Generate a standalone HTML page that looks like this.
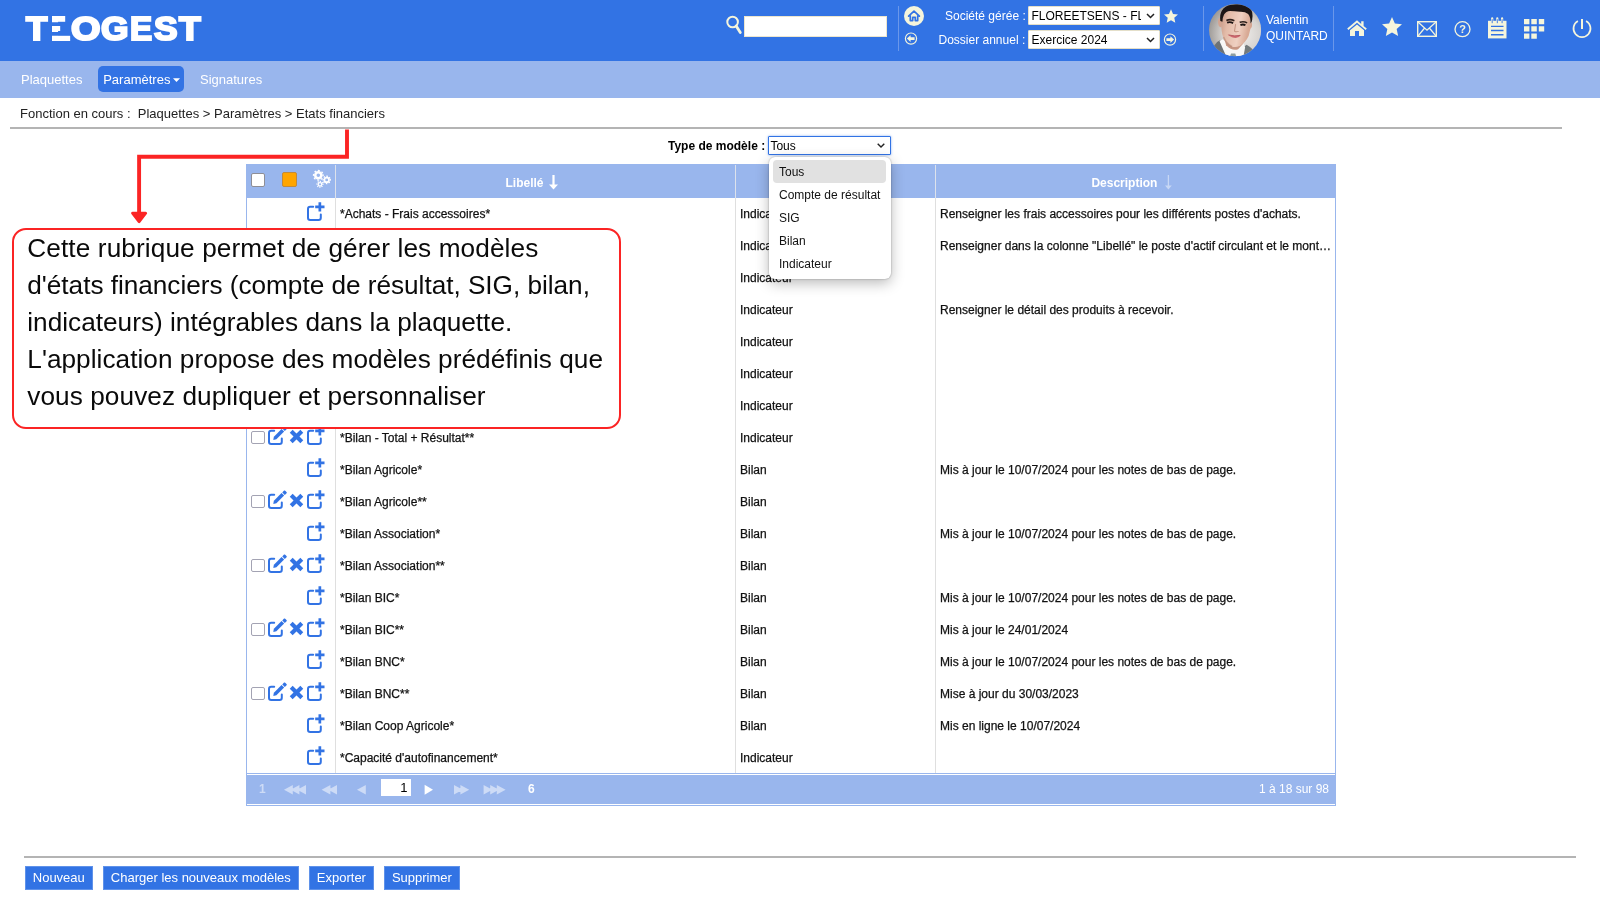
<!DOCTYPE html>
<html lang="fr">
<head>
<meta charset="utf-8">
<title>TEOGEST - Etats financiers</title>
<style>
*{box-sizing:border-box;margin:0;padding:0}
html,body{width:1600px;height:900px;overflow:hidden;background:#fff}
#wrap{position:absolute;left:0;top:0;width:1600px;height:900px;will-change:transform}
body{font-family:"Liberation Sans",Arial,sans-serif;font-size:12px;color:#000;position:relative}
.abs{position:absolute}
#top{position:absolute;left:0;top:0;width:1600px;height:61px;background:#3273e4}
#nav{position:absolute;left:0;top:61px;width:1600px;height:37px;background:#99b6ed}
#nav span{position:absolute;top:0;line-height:37px;font-size:13px;color:#fff;white-space:nowrap}
#nav .act{top:5px;height:26px;line-height:27px;background:#3273e4;border-radius:5px;padding:0 0 0 5.4px;width:86.6px}
#crumb{position:absolute;left:20px;top:106px;font-size:13px;line-height:16px;white-space:nowrap;color:#222}
.hr{position:absolute;height:1px;background:#b4b4b4}
.lbl{position:absolute;color:#fff;font-size:12.5px;white-space:nowrap;line-height:16px}
.sel{position:absolute;background:#fff;border:1px solid #e4dfc9;border-radius:1px;font-size:12.5px;line-height:15px;white-space:nowrap;overflow:hidden;color:#000}
.sel b{position:absolute;right:4px;top:0;font-weight:normal}
.vsep{position:absolute;width:1px;background:#6a97ea}
#logo{position:absolute;left:0;top:8.99px;height:40px;white-space:nowrap;color:#fff;font-weight:bold;font-size:33.65px;line-height:40px;-webkit-text-stroke:2.2px #fff}
#logo span{position:absolute;top:0;transform-origin:0 0;display:block}
.sel .st{position:absolute;left:2.5px;top:1px;width:109px;overflow:hidden;font-size:12px;line-height:16px}
/* table */
#grid{position:absolute;left:246px;top:164px;width:1090px;height:642px;border:1px solid #99b6ed;border-top:none}
#ghead{position:absolute;left:-1px;top:0;width:1090px;height:34px;background:#99b6ed}
#ghead .h{position:absolute;top:0;height:34px;line-height:38px;color:#fff;font-weight:bold;font-size:12px;white-space:nowrap}
.cl{position:absolute;top:34px;width:1px;height:576px;background:#dfdfdf}
.hl{position:absolute;top:1px;width:1.2px;height:33px;background:#dde2ec}
.r{position:absolute;left:0;width:1088px;height:32px;line-height:32px;font-size:12px;color:#111;white-space:nowrap;-webkit-text-stroke:.25px #111}
.r span{position:absolute;top:0}
.r .a{left:93px}.r .b{left:493px}.r .c{left:693px}
#pager{position:absolute;left:-1px;top:611px;width:1090px;height:29px;background:#99b6ed;color:#fff;font-size:12px;line-height:29px}
#bline{position:absolute;left:0;top:609px;width:1088px;height:1px;background:#99b6ed}
#pager span{position:absolute;top:0;white-space:nowrap}
.btn{position:absolute;top:866.4px;height:23.4px;line-height:22px;background:#3273e4;color:#fff;font-size:13px;text-align:center;white-space:nowrap;border:1px solid #5f92ea}
/* popup */
#pop{position:absolute;left:769px;top:156.5px;width:122px;height:122.5px;background:#fff;border-radius:6px;box-shadow:0 4px 14px rgba(0,0,0,.28),0 0 2px rgba(0,0,0,.35);font-size:12px}
#pop div{position:absolute;left:4px;width:113px;height:23px;line-height:25px;padding-left:6px;border-radius:4px;white-space:nowrap;color:#111}
/* callout */
#call{position:absolute;left:12px;top:228px;width:608.5px;height:200.7px;background:#fff;border:2px solid #fb2424;border-radius:14px}
#call p{position:absolute;left:13.3px;white-space:nowrap;font-size:26.2px;line-height:37px;color:#0a0a0a}
svg{position:absolute;overflow:visible}
.cb{position:absolute;left:4.2px;top:8.5px;width:13.5px;height:13.5px;border:1.4px solid #a3a3b3;border-radius:2px;background:#fff}
</style>
</head>
<body>
<div id="wrap">
<div id="top">
<div id="logo"><span style="left:26.06px;transform:scaleX(1.037)">T</span><span style="left:50.81px;transform:scaleX(0.86);clip-path:polygon(1.15px 6px,16.5px 6px,16.5px 13.34px,1.15px 13.34px,1.15px 16.97px,10.69px 16.97px,10.69px 22.9px,1.15px 22.9px,1.15px 26.81px,30px 26.81px,30px 35px,1.15px 35px)">E</span><span style="left:70.58px;transform:scaleX(1.127)">O</span><span style="left:101.21px;transform:scaleX(1.049)">G</span><span style="left:129.86px;transform:scaleX(0.984)">E</span><span style="left:153.83px;transform:scaleX(1.048)">S</span><span style="left:178.57px;transform:scaleX(1.055)">T</span></div>
<svg style="left:726px;top:14.6px" width="16" height="19" viewBox="0 0 16 19"><circle cx="6.6" cy="7" r="5.3" fill="none" stroke="#f5f5dc" stroke-width="2"/><path d="M10.2 11L14.3 17.5" stroke="#f5f5dc" stroke-width="2.8" stroke-linecap="round"/></svg>
<div class="abs" style="left:744.4px;top:16.4px;width:142.2px;height:20.4px;background:#fff;border:1px solid #ece6cf"></div>
<div class="vsep" style="left:898px;top:6px;height:45px"></div>
<svg style="left:904px;top:6px" width="20" height="20" viewBox="0 0 20 20"><circle cx="10" cy="10" r="10" fill="#f5f5dc"/><path d="M4.6 10.2L10 5.2L15.4 10.2M6.3 9.4V14.6H8.7V11.3H11.3V14.6H13.7V9.4" fill="none" stroke="#3273e4" stroke-width="1.7" stroke-linejoin="round" stroke-linecap="round"/></svg>
<svg style="left:904px;top:32.4px" width="14" height="14" viewBox="0 0 14 14"><circle cx="7" cy="6.6" r="5.6" fill="none" stroke="#f5f5dc" stroke-width="1.2"/><path d="M2.9 6.6L6.6 3.2V5.3H10.6V7.9H6.6V10Z" fill="#f5f5dc"/></svg>
<div class="lbl" style="left:945px;top:8px;font-size:12px">Société gérée :</div>
<div class="lbl" style="left:938.5px;top:32px;font-size:12px">Dossier annuel :</div>
<div class="sel" style="left:1028px;top:6px;width:132px;height:19px"><span class="st">FLOREETSENS - FL</span><svg style="left:116.5px;top:6px" width="9" height="6" viewBox="0 0 9 6"><path d="M1 1L4.5 4.5L8 1" fill="none" stroke="#222" stroke-width="1.5"/></svg></div>
<div class="sel" style="left:1028px;top:30px;width:132px;height:19px"><span class="st">Exercice 2024</span><svg style="left:116.5px;top:6px" width="9" height="6" viewBox="0 0 9 6"><path d="M1 1L4.5 4.5L8 1" fill="none" stroke="#222" stroke-width="1.5"/></svg></div>
<svg style="left:1163.5px;top:8.5px" width="14" height="14" viewBox="0 0 20 19"><path d="M10.00 0.00L12.88 6.54L19.99 7.26L14.66 12.01L16.17 18.99L10.00 15.40L3.83 18.99L5.34 12.01L0.01 7.26L7.12 6.54Z" fill="#f5f5dc"/></svg>
<svg style="left:1163px;top:32.5px" width="14" height="14" viewBox="0 0 14 14"><circle cx="7" cy="6.6" r="5.6" fill="none" stroke="#f5f5dc" stroke-width="1.2"/><path d="M11.1 6.6L7.4 3.2V5.3H3.4V7.9H7.4V10Z" fill="#f5f5dc"/></svg>
<div class="vsep" style="left:1203px;top:6px;height:45px"></div>
<svg style="left:1209px;top:3.8px" width="52.2" height="52.2" viewBox="0 0 52 52">
<defs><radialGradient id="avbg" cx="62%" cy="58%" r="65%"><stop offset="0" stop-color="#f0eeec"/><stop offset="0.55" stop-color="#d6d3d0"/><stop offset="1" stop-color="#9a9693"/></radialGradient>
<linearGradient id="avsk" x1="0" y1="0" x2="1" y2="0.25"><stop offset="0" stop-color="#c2937f"/><stop offset="0.3" stop-color="#e3bba8"/><stop offset="0.7" stop-color="#efd0c1"/><stop offset="1" stop-color="#d8a994"/></linearGradient>
<clipPath id="avc"><circle cx="26" cy="26" r="26"/></clipPath>
<filter id="avf" x="-10%" y="-10%" width="120%" height="120%"><feGaussianBlur stdDeviation="0.62"/></filter></defs>
<g clip-path="url(#avc)"><rect width="52" height="52" fill="url(#avbg)"/><g filter="url(#avf)">
<path d="M2 54L5.5 41Q7 37.5 11 36L14 41L20 54Z" fill="#6c7275"/>
<path d="M33 54L34 43L37.5 40.5Q42 43 44.5 46L46 54Z" fill="#737a7c"/>
<path d="M10.5 37L13.5 35L24 42L34.5 39.5L36 43L34 54H18Z" fill="#f7f7f6"/>
<path d="M15 33L17 41Q23 47 29 45L34 39.5L33.5 33Z" fill="#c79683"/>
<path d="M20.5 53L22 49.2H26.2L27.4 53Z" fill="#8e9e9f"/>
<path d="M9.5 14.5Q8.3 17 9.6 21.5Q10.5 23.5 12.5 23L12.5 14ZM41.5 18Q43.6 18.5 42.6 23Q41.8 25 40.2 25Z" fill="#d3a491"/>
<path d="M12 16Q11.5 4 26 2Q41 2.5 41.5 17Q42 25 39.5 32Q36.5 38.5 31 41.5Q27 43.5 23 42.5Q17 40 14 33Q12 27 12 16Z" fill="url(#avsk)"/>
<path d="M11.3 17Q9.5 3.5 22 0.8Q34 -1.5 41 4.5Q44.5 8.5 43 16Q42.6 18.5 41.4 19.5Q41.6 13 39 10Q36 7.6 31 7.8Q25 7.2 21 7Q16.8 7.4 15 10.5Q13.6 13 13.4 17.8Z" fill="#1c1715"/>
<path d="M17.3 16.4Q21 14.6 25.3 16.6M30.6 18.3Q34.5 17 38 18.8" stroke="#33241f" stroke-width="1.6" fill="none"/>
<path d="M18 18.6Q21 17.4 24 19M31.3 21Q34 19.9 36.3 21.2" stroke="#1f1613" stroke-width="1.9" fill="none"/>
<path d="M26.5 20L25.4 27Q27 28.3 29.6 27.3" stroke="#c49480" stroke-width="1" fill="none"/>
<path d="M18.3 30.3Q25 32.6 32 30.9Q27.5 37 18.3 30.3Z" fill="#cf6a70"/>
<path d="M19.5 30.8Q25.5 32.6 31 31.3" stroke="#b5545c" stroke-width="0.9" fill="none"/>
<path d="M14.5 33Q17.5 40 23 42.5" stroke="#b07f6b" stroke-width="1.6" fill="none" opacity=".55"/>
</g></g></svg>
<div class="lbl" style="left:1266px;top:11.8px;font-size:12px">Valentin</div>
<div class="lbl" style="left:1266px;top:28px;font-size:12px">QUINTARD</div>
<div class="vsep" style="left:1333px;top:6px;height:45px"></div>
<svg style="left:1347px;top:20px" width="20" height="16" viewBox="0 0 20 16"><path d="M10 0.3L0.2 8.6L1.4 10L10 2.8L18.6 10L19.8 8.6L16.6 5.9V1.2H14.2V3.9Z" fill="#f5f5dc"/><path d="M10 4.4L3 10.2V16H8V11H12V16H17V10.2Z" fill="#f5f5dc"/></svg>
<svg style="left:1382px;top:16.5px" width="20" height="19" viewBox="0 0 20 19"><path d="M10.00 0.00L12.88 6.54L19.99 7.26L14.66 12.01L16.17 18.99L10.00 15.40L3.83 18.99L5.34 12.01L0.01 7.26L7.12 6.54Z" fill="#f5f5dc"/></svg>
<svg style="left:1417px;top:21px" width="20" height="16" viewBox="0 0 20 16"><rect x="0.7" y="0.7" width="18.6" height="14.6" fill="none" stroke="#f5f5dc" stroke-width="1.4"/><path d="M0.7 0.7L10 9.2L19.3 0.7M0.7 15.3L7.6 7M19.3 15.3L12.4 7" fill="none" stroke="#f5f5dc" stroke-width="1.3"/></svg>
<svg style="left:1453.5px;top:20.8px" width="17" height="17" viewBox="0 0 17 17"><circle cx="8.5" cy="8.2" r="7.5" fill="none" stroke="#f5f5dc" stroke-width="1.3"/><text x="8.5" y="12" text-anchor="middle" font-family="Liberation Sans,Arial,sans-serif" font-size="11" font-weight="bold" fill="#f5f5dc">?</text></svg>
<svg style="left:1487.8px;top:17.6px" width="19" height="21" viewBox="0 0 19 21"><path d="M0 2.8H18.5V20.4H0Z" fill="#f5f5dc"/><path d="M3 8.4H15.5M3 12.5H15.5M3 16.7H15.5" stroke="#3273e4" stroke-width="1.4"/><path d="M4.2 0.4V4.6M9.3 0.4V4.6M14.1 0.4V4.6" stroke="#f5f5dc" stroke-width="2.2" stroke-linecap="round"/><path d="M4.2 1.6V4.8M9.3 1.6V4.8M14.1 1.6V4.8" stroke="#3273e4" stroke-width="0.9" stroke-linecap="round"/></svg>
<svg style="left:1523.9px;top:19.1px" width="21" height="20" viewBox="0 0 21 20"><path d="M0 0h5.4v5.3H0zM7.3 0h5.5v5.3H7.3zM14.8 0h5.4v5.3h-5.4zM0 7.3h5.4v5.2H0zM7.3 7.3h5.5v5.2H7.3zM14.8 7.3h5.4v5.2h-5.4zM0 14.5h5.4v5.3H0zM7.3 14.5h5.5v5.3H7.3z" fill="#f5f5dc"/></svg>
<svg style="left:1572px;top:18px" width="20" height="21" viewBox="0 0 20 21"><path d="M5.9 3.1A8.5 8.5 0 1 0 14.1 3.1" fill="none" stroke="#f5f5dc" stroke-width="1.7"/><path d="M10 0.9V11" stroke="#f5f5dc" stroke-width="2"/></svg>
</div>
<div id="nav">
<span style="left:21px">Plaquettes</span>
<span class="act" style="left:97.8px">Paramètres<i style="display:inline-block;width:7px;height:3.8px;background:#fff;clip-path:polygon(0 0,100% 0,50% 100%);margin-left:2.6px;vertical-align:2px"></i></span>
<span style="left:200px">Signatures</span>
</div>
<div id="crumb">Fonction en cours :&nbsp; Plaquettes &gt; Paramètres &gt; Etats financiers</div>
<div class="hr" style="left:10px;top:127px;width:1552px;height:2px"></div>
<div class="hr" style="left:24px;top:856px;width:1552px;height:2px"></div>

<div class="abs" style="left:668px;top:138px;font-size:12px;font-weight:bold;line-height:16px;white-space:nowrap">Type de modèle :</div>
<div class="sel" style="left:768px;top:136px;width:123px;height:19px;border:1.6px solid #3273e4;box-shadow:0 0 2.5px rgba(58,120,230,.6);font-size:12px;line-height:17px;padding:1px 0 0 1.4px">Tous<svg style="left:108px;top:5.6px" width="8" height="5" viewBox="0 0 8 5"><path d="M0.7 0.7L4 4L7.3 0.7" fill="none" stroke="#222" stroke-width="1.4"/></svg></div>

<div id="grid">
<div id="ghead">
<i class="cb" style="left:5.2px;top:9.2px;border-color:#8e8e96"></i><i class="abs" style="left:36px;top:8.2px;width:14.5px;height:14.5px;background:#ffa500;border:1px solid #c28a3a;border-radius:2px"></i><svg style="left:66px;top:5px" width="20" height="20" viewBox="0 0 20 20"><circle cx="6.3" cy="6.3" r="3.05" fill="none" stroke="#fff" stroke-width="2.50"/><circle cx="6.3" cy="6.3" r="4.80" fill="none" stroke="#fff" stroke-width="1.3" stroke-dasharray="1.960 1.810" transform="rotate(-12 6.3 6.3)"/><circle cx="14.7" cy="10.9" r="2.30" fill="none" stroke="#fff" stroke-width="1.70"/><circle cx="14.7" cy="10.9" r="3.65" fill="none" stroke="#fff" stroke-width="1.3" stroke-dasharray="1.491 1.376" transform="rotate(-12 14.7 10.9)"/><circle cx="8" cy="15.3" r="1.78" fill="none" stroke="#fff" stroke-width="1.25"/><circle cx="8" cy="15.3" r="2.90" fill="none" stroke="#fff" stroke-width="1.3" stroke-dasharray="1.184 1.093" transform="rotate(-12 8 15.3)"/></svg>
<div class="h" style="left:259.5px">Libellé</div><svg style="left:303.4px;top:10.5px" width="9" height="15" viewBox="0 0 9 15"><path d="M4.5 0V12" stroke="#fff" stroke-width="2.2"/><path d="M0 9.6L4.5 14.6L9 9.6Z" fill="#fff"/></svg>
<div class="h" style="left:845.4px">Description</div><svg style="left:918.9px;top:10.5px;opacity:.45" width="7" height="15" viewBox="0 0 7 15"><path d="M3.4 0V12" stroke="#fff" stroke-width="1.3"/><path d="M0 10.4L3.4 14.6L6.8 10.4Z" fill="#fff"/></svg>
<div class="hl" style="left:89px"></div><div class="hl" style="left:489px"></div><div class="hl" style="left:689px"></div>
</div>
<div class="cl" style="left:88px"></div><div class="cl" style="left:488px"></div><div class="cl" style="left:688px"></div>
<!--ROWS-->
<div class="r" style="top:34px"><svg class="ic" style="left:59.7px;top:2.8px" width="19" height="20" viewBox="0 0 19 20"><path d="M6.2 5.7H3.2Q1 5.7 1 7.9V16.8Q1 19 3.2 19H11.6Q13.8 19 13.8 16.8V13.6" fill="none" stroke="#3273e4" stroke-width="2" stroke-linecap="round"/><path d="M8.2 5.9H17.5M12.85 1.2V10.6" fill="none" stroke="#3273e4" stroke-width="2.7"/></svg><span class="a">*Achats - Frais accessoires*</span><span class="b">Indicateur</span><span class="c">Renseigner les frais accessoires pour les différents postes d'achats.</span></div>
<div class="r" style="top:66px"><svg class="ic" style="left:59.7px;top:2.8px" width="19" height="20" viewBox="0 0 19 20"><path d="M6.2 5.7H3.2Q1 5.7 1 7.9V16.8Q1 19 3.2 19H11.6Q13.8 19 13.8 16.8V13.6" fill="none" stroke="#3273e4" stroke-width="2" stroke-linecap="round"/><path d="M8.2 5.9H17.5M12.85 1.2V10.6" fill="none" stroke="#3273e4" stroke-width="2.7"/></svg><span class="a">*Actif circulant - Détail*</span><span class="b">Indicateur</span><span class="c">Renseigner dans la colonne &quot;Libellé&quot; le poste d'actif circulant et le mont…</span></div>
<div class="r" style="top:98px"><i class="cb"></i><svg class="ic" style="left:21px;top:2.8px" width="19" height="20" viewBox="0 0 19 20"><path d="M6.2 5.7H3.2Q1 5.7 1 7.9V16.8Q1 19 3.2 19H11.6Q13.8 19 13.8 16.8V13.6" fill="none" stroke="#3273e4" stroke-width="2" stroke-linecap="round"/><path d="M5.3 14.9L5.87 11.79L13.58 4.08L16.12 6.62L8.41 14.33Z" fill="#3273e4"/><path d="M14.28 3.38L16.05 1.61Q16.6 1.1 17.2 1.7L18.5 3Q19.1 3.6 18.59 4.15L16.82 5.92Z" fill="#3273e4"/></svg><svg class="ic" style="left:41.6px;top:7.2px" width="15" height="15" viewBox="0 0 15 15"><path d="M2.2 2.2L12.8 12.8M12.8 2.2L2.2 12.8" fill="none" stroke="#3273e4" stroke-width="4.1" stroke-linecap="butt"/></svg><svg class="ic" style="left:59.7px;top:2.8px" width="19" height="20" viewBox="0 0 19 20"><path d="M6.2 5.7H3.2Q1 5.7 1 7.9V16.8Q1 19 3.2 19H11.6Q13.8 19 13.8 16.8V13.6" fill="none" stroke="#3273e4" stroke-width="2" stroke-linecap="round"/><path d="M8.2 5.9H17.5M12.85 1.2V10.6" fill="none" stroke="#3273e4" stroke-width="2.7"/></svg><span class="a">*Analyse de la marge**</span><span class="b">Indicateur</span></div>
<div class="r" style="top:130px"><svg class="ic" style="left:59.7px;top:2.8px" width="19" height="20" viewBox="0 0 19 20"><path d="M6.2 5.7H3.2Q1 5.7 1 7.9V16.8Q1 19 3.2 19H11.6Q13.8 19 13.8 16.8V13.6" fill="none" stroke="#3273e4" stroke-width="2" stroke-linecap="round"/><path d="M8.2 5.9H17.5M12.85 1.2V10.6" fill="none" stroke="#3273e4" stroke-width="2.7"/></svg><span class="a">*Autres produits à recevoir*</span><span class="b">Indicateur</span><span class="c">Renseigner le détail des produits à recevoir.</span></div>
<div class="r" style="top:162px"><svg class="ic" style="left:59.7px;top:2.8px" width="19" height="20" viewBox="0 0 19 20"><path d="M6.2 5.7H3.2Q1 5.7 1 7.9V16.8Q1 19 3.2 19H11.6Q13.8 19 13.8 16.8V13.6" fill="none" stroke="#3273e4" stroke-width="2" stroke-linecap="round"/><path d="M8.2 5.9H17.5M12.85 1.2V10.6" fill="none" stroke="#3273e4" stroke-width="2.7"/></svg><span class="a">*Besoin en fonds de roulement*</span><span class="b">Indicateur</span></div>
<div class="r" style="top:194px"><svg class="ic" style="left:59.7px;top:2.8px" width="19" height="20" viewBox="0 0 19 20"><path d="M6.2 5.7H3.2Q1 5.7 1 7.9V16.8Q1 19 3.2 19H11.6Q13.8 19 13.8 16.8V13.6" fill="none" stroke="#3273e4" stroke-width="2" stroke-linecap="round"/><path d="M8.2 5.9H17.5M12.85 1.2V10.6" fill="none" stroke="#3273e4" stroke-width="2.7"/></svg><span class="a">*Bilan - Fonds de roulement*</span><span class="b">Indicateur</span></div>
<div class="r" style="top:226px"><svg class="ic" style="left:59.7px;top:2.8px" width="19" height="20" viewBox="0 0 19 20"><path d="M6.2 5.7H3.2Q1 5.7 1 7.9V16.8Q1 19 3.2 19H11.6Q13.8 19 13.8 16.8V13.6" fill="none" stroke="#3273e4" stroke-width="2" stroke-linecap="round"/><path d="M8.2 5.9H17.5M12.85 1.2V10.6" fill="none" stroke="#3273e4" stroke-width="2.7"/></svg><span class="a">*Bilan - Total + Résultat*</span><span class="b">Indicateur</span></div>
<div class="r" style="top:258px"><i class="cb"></i><svg class="ic" style="left:21px;top:2.8px" width="19" height="20" viewBox="0 0 19 20"><path d="M6.2 5.7H3.2Q1 5.7 1 7.9V16.8Q1 19 3.2 19H11.6Q13.8 19 13.8 16.8V13.6" fill="none" stroke="#3273e4" stroke-width="2" stroke-linecap="round"/><path d="M5.3 14.9L5.87 11.79L13.58 4.08L16.12 6.62L8.41 14.33Z" fill="#3273e4"/><path d="M14.28 3.38L16.05 1.61Q16.6 1.1 17.2 1.7L18.5 3Q19.1 3.6 18.59 4.15L16.82 5.92Z" fill="#3273e4"/></svg><svg class="ic" style="left:41.6px;top:7.2px" width="15" height="15" viewBox="0 0 15 15"><path d="M2.2 2.2L12.8 12.8M12.8 2.2L2.2 12.8" fill="none" stroke="#3273e4" stroke-width="4.1" stroke-linecap="butt"/></svg><svg class="ic" style="left:59.7px;top:2.8px" width="19" height="20" viewBox="0 0 19 20"><path d="M6.2 5.7H3.2Q1 5.7 1 7.9V16.8Q1 19 3.2 19H11.6Q13.8 19 13.8 16.8V13.6" fill="none" stroke="#3273e4" stroke-width="2" stroke-linecap="round"/><path d="M8.2 5.9H17.5M12.85 1.2V10.6" fill="none" stroke="#3273e4" stroke-width="2.7"/></svg><span class="a">*Bilan - Total + Résultat**</span><span class="b">Indicateur</span></div>
<div class="r" style="top:290px"><svg class="ic" style="left:59.7px;top:2.8px" width="19" height="20" viewBox="0 0 19 20"><path d="M6.2 5.7H3.2Q1 5.7 1 7.9V16.8Q1 19 3.2 19H11.6Q13.8 19 13.8 16.8V13.6" fill="none" stroke="#3273e4" stroke-width="2" stroke-linecap="round"/><path d="M8.2 5.9H17.5M12.85 1.2V10.6" fill="none" stroke="#3273e4" stroke-width="2.7"/></svg><span class="a">*Bilan Agricole*</span><span class="b">Bilan</span><span class="c">Mis à jour le 10/07/2024 pour les notes de bas de page.</span></div>
<div class="r" style="top:322px"><i class="cb"></i><svg class="ic" style="left:21px;top:2.8px" width="19" height="20" viewBox="0 0 19 20"><path d="M6.2 5.7H3.2Q1 5.7 1 7.9V16.8Q1 19 3.2 19H11.6Q13.8 19 13.8 16.8V13.6" fill="none" stroke="#3273e4" stroke-width="2" stroke-linecap="round"/><path d="M5.3 14.9L5.87 11.79L13.58 4.08L16.12 6.62L8.41 14.33Z" fill="#3273e4"/><path d="M14.28 3.38L16.05 1.61Q16.6 1.1 17.2 1.7L18.5 3Q19.1 3.6 18.59 4.15L16.82 5.92Z" fill="#3273e4"/></svg><svg class="ic" style="left:41.6px;top:7.2px" width="15" height="15" viewBox="0 0 15 15"><path d="M2.2 2.2L12.8 12.8M12.8 2.2L2.2 12.8" fill="none" stroke="#3273e4" stroke-width="4.1" stroke-linecap="butt"/></svg><svg class="ic" style="left:59.7px;top:2.8px" width="19" height="20" viewBox="0 0 19 20"><path d="M6.2 5.7H3.2Q1 5.7 1 7.9V16.8Q1 19 3.2 19H11.6Q13.8 19 13.8 16.8V13.6" fill="none" stroke="#3273e4" stroke-width="2" stroke-linecap="round"/><path d="M8.2 5.9H17.5M12.85 1.2V10.6" fill="none" stroke="#3273e4" stroke-width="2.7"/></svg><span class="a">*Bilan Agricole**</span><span class="b">Bilan</span></div>
<div class="r" style="top:354px"><svg class="ic" style="left:59.7px;top:2.8px" width="19" height="20" viewBox="0 0 19 20"><path d="M6.2 5.7H3.2Q1 5.7 1 7.9V16.8Q1 19 3.2 19H11.6Q13.8 19 13.8 16.8V13.6" fill="none" stroke="#3273e4" stroke-width="2" stroke-linecap="round"/><path d="M8.2 5.9H17.5M12.85 1.2V10.6" fill="none" stroke="#3273e4" stroke-width="2.7"/></svg><span class="a">*Bilan Association*</span><span class="b">Bilan</span><span class="c">Mis à jour le 10/07/2024 pour les notes de bas de page.</span></div>
<div class="r" style="top:386px"><i class="cb"></i><svg class="ic" style="left:21px;top:2.8px" width="19" height="20" viewBox="0 0 19 20"><path d="M6.2 5.7H3.2Q1 5.7 1 7.9V16.8Q1 19 3.2 19H11.6Q13.8 19 13.8 16.8V13.6" fill="none" stroke="#3273e4" stroke-width="2" stroke-linecap="round"/><path d="M5.3 14.9L5.87 11.79L13.58 4.08L16.12 6.62L8.41 14.33Z" fill="#3273e4"/><path d="M14.28 3.38L16.05 1.61Q16.6 1.1 17.2 1.7L18.5 3Q19.1 3.6 18.59 4.15L16.82 5.92Z" fill="#3273e4"/></svg><svg class="ic" style="left:41.6px;top:7.2px" width="15" height="15" viewBox="0 0 15 15"><path d="M2.2 2.2L12.8 12.8M12.8 2.2L2.2 12.8" fill="none" stroke="#3273e4" stroke-width="4.1" stroke-linecap="butt"/></svg><svg class="ic" style="left:59.7px;top:2.8px" width="19" height="20" viewBox="0 0 19 20"><path d="M6.2 5.7H3.2Q1 5.7 1 7.9V16.8Q1 19 3.2 19H11.6Q13.8 19 13.8 16.8V13.6" fill="none" stroke="#3273e4" stroke-width="2" stroke-linecap="round"/><path d="M8.2 5.9H17.5M12.85 1.2V10.6" fill="none" stroke="#3273e4" stroke-width="2.7"/></svg><span class="a">*Bilan Association**</span><span class="b">Bilan</span></div>
<div class="r" style="top:418px"><svg class="ic" style="left:59.7px;top:2.8px" width="19" height="20" viewBox="0 0 19 20"><path d="M6.2 5.7H3.2Q1 5.7 1 7.9V16.8Q1 19 3.2 19H11.6Q13.8 19 13.8 16.8V13.6" fill="none" stroke="#3273e4" stroke-width="2" stroke-linecap="round"/><path d="M8.2 5.9H17.5M12.85 1.2V10.6" fill="none" stroke="#3273e4" stroke-width="2.7"/></svg><span class="a">*Bilan BIC*</span><span class="b">Bilan</span><span class="c">Mis à jour le 10/07/2024 pour les notes de bas de page.</span></div>
<div class="r" style="top:450px"><i class="cb"></i><svg class="ic" style="left:21px;top:2.8px" width="19" height="20" viewBox="0 0 19 20"><path d="M6.2 5.7H3.2Q1 5.7 1 7.9V16.8Q1 19 3.2 19H11.6Q13.8 19 13.8 16.8V13.6" fill="none" stroke="#3273e4" stroke-width="2" stroke-linecap="round"/><path d="M5.3 14.9L5.87 11.79L13.58 4.08L16.12 6.62L8.41 14.33Z" fill="#3273e4"/><path d="M14.28 3.38L16.05 1.61Q16.6 1.1 17.2 1.7L18.5 3Q19.1 3.6 18.59 4.15L16.82 5.92Z" fill="#3273e4"/></svg><svg class="ic" style="left:41.6px;top:7.2px" width="15" height="15" viewBox="0 0 15 15"><path d="M2.2 2.2L12.8 12.8M12.8 2.2L2.2 12.8" fill="none" stroke="#3273e4" stroke-width="4.1" stroke-linecap="butt"/></svg><svg class="ic" style="left:59.7px;top:2.8px" width="19" height="20" viewBox="0 0 19 20"><path d="M6.2 5.7H3.2Q1 5.7 1 7.9V16.8Q1 19 3.2 19H11.6Q13.8 19 13.8 16.8V13.6" fill="none" stroke="#3273e4" stroke-width="2" stroke-linecap="round"/><path d="M8.2 5.9H17.5M12.85 1.2V10.6" fill="none" stroke="#3273e4" stroke-width="2.7"/></svg><span class="a">*Bilan BIC**</span><span class="b">Bilan</span><span class="c">Mis à jour le 24/01/2024</span></div>
<div class="r" style="top:482px"><svg class="ic" style="left:59.7px;top:2.8px" width="19" height="20" viewBox="0 0 19 20"><path d="M6.2 5.7H3.2Q1 5.7 1 7.9V16.8Q1 19 3.2 19H11.6Q13.8 19 13.8 16.8V13.6" fill="none" stroke="#3273e4" stroke-width="2" stroke-linecap="round"/><path d="M8.2 5.9H17.5M12.85 1.2V10.6" fill="none" stroke="#3273e4" stroke-width="2.7"/></svg><span class="a">*Bilan BNC*</span><span class="b">Bilan</span><span class="c">Mis à jour le 10/07/2024 pour les notes de bas de page.</span></div>
<div class="r" style="top:514px"><i class="cb"></i><svg class="ic" style="left:21px;top:2.8px" width="19" height="20" viewBox="0 0 19 20"><path d="M6.2 5.7H3.2Q1 5.7 1 7.9V16.8Q1 19 3.2 19H11.6Q13.8 19 13.8 16.8V13.6" fill="none" stroke="#3273e4" stroke-width="2" stroke-linecap="round"/><path d="M5.3 14.9L5.87 11.79L13.58 4.08L16.12 6.62L8.41 14.33Z" fill="#3273e4"/><path d="M14.28 3.38L16.05 1.61Q16.6 1.1 17.2 1.7L18.5 3Q19.1 3.6 18.59 4.15L16.82 5.92Z" fill="#3273e4"/></svg><svg class="ic" style="left:41.6px;top:7.2px" width="15" height="15" viewBox="0 0 15 15"><path d="M2.2 2.2L12.8 12.8M12.8 2.2L2.2 12.8" fill="none" stroke="#3273e4" stroke-width="4.1" stroke-linecap="butt"/></svg><svg class="ic" style="left:59.7px;top:2.8px" width="19" height="20" viewBox="0 0 19 20"><path d="M6.2 5.7H3.2Q1 5.7 1 7.9V16.8Q1 19 3.2 19H11.6Q13.8 19 13.8 16.8V13.6" fill="none" stroke="#3273e4" stroke-width="2" stroke-linecap="round"/><path d="M8.2 5.9H17.5M12.85 1.2V10.6" fill="none" stroke="#3273e4" stroke-width="2.7"/></svg><span class="a">*Bilan BNC**</span><span class="b">Bilan</span><span class="c">Mise à jour du 30/03/2023</span></div>
<div class="r" style="top:546px"><svg class="ic" style="left:59.7px;top:2.8px" width="19" height="20" viewBox="0 0 19 20"><path d="M6.2 5.7H3.2Q1 5.7 1 7.9V16.8Q1 19 3.2 19H11.6Q13.8 19 13.8 16.8V13.6" fill="none" stroke="#3273e4" stroke-width="2" stroke-linecap="round"/><path d="M8.2 5.9H17.5M12.85 1.2V10.6" fill="none" stroke="#3273e4" stroke-width="2.7"/></svg><span class="a">*Bilan Coop Agricole*</span><span class="b">Bilan</span><span class="c">Mis en ligne le 10/07/2024</span></div>
<div class="r" style="top:578px"><svg class="ic" style="left:59.7px;top:2.8px" width="19" height="20" viewBox="0 0 19 20"><path d="M6.2 5.7H3.2Q1 5.7 1 7.9V16.8Q1 19 3.2 19H11.6Q13.8 19 13.8 16.8V13.6" fill="none" stroke="#3273e4" stroke-width="2" stroke-linecap="round"/><path d="M8.2 5.9H17.5M12.85 1.2V10.6" fill="none" stroke="#3273e4" stroke-width="2.7"/></svg><span class="a">*Capacité d'autofinancement*</span><span class="b">Indicateur</span></div>
<!--/ROWS-->
<div id="bline"></div>
<div id="pager">
<span style="left:13px;color:#cddbf6;font-weight:bold;font-size:12px">1</span>
<svg style="left:0;top:9.5px" width="300" height="10" viewBox="0 0 300 10"><path d="M46.8 0L38 4.7L46.8 9.4ZM53.400000000000006 0L44.6 4.7L53.400000000000006 9.4ZM60.0 0L51.2 4.7L60.0 9.4ZM84.39999999999999 0L75.6 4.7L84.39999999999999 9.4ZM91.0 0L82.2 4.7L91.0 9.4ZM119.8 0L111 4.7L119.8 9.4ZM208 0L216.8 4.7L208 9.4ZM214.4 0L223.20000000000002 4.7L214.4 9.4ZM237.6 0L246.4 4.7L237.6 9.4ZM244.2 0L253.0 4.7L244.2 9.4ZM250.8 0L259.6 4.7L250.8 9.4Z" fill="#cddbf6"/><path d="M178.6 -0.3L187 4.7L178.6 9.7Z" fill="#fff"/></svg>
<div class="abs" style="left:134.5px;top:3.5px;width:30px;height:17px;background:#fff;color:#000;font-size:13px;line-height:17px;text-align:right;padding-right:3px">1</div>
<span style="left:282px;font-weight:bold;font-size:12px">6</span>
<span style="right:7px;font-size:12px">1 à 18 sur 98</span>
</div>
</div>

<div class="btn" style="left:24.5px;width:68.6px">Nouveau</div>
<div class="btn" style="left:102.5px;width:196.6px">Charger les nouveaux modèles</div>
<div class="btn" style="left:308.6px;width:65.6px">Exporter</div>
<div class="btn" style="left:383.6px;width:76.6px">Supprimer</div>

<div id="pop">
<div style="top:3.5px;background:#e1e1e1">Tous</div>
<div style="top:26.5px">Compte de résultat</div>
<div style="top:49.5px">SIG</div>
<div style="top:72.5px">Bilan</div>
<div style="top:95.5px">Indicateur</div>
</div>

<svg style="left:0;top:0" width="400" height="230" viewBox="0 0 400 230"><path d="M347 129.5V156.8H139.1V214" fill="none" stroke="#fb2424" stroke-width="3.9" stroke-linejoin="miter"/><path d="M132.6 213.2H145.6L139.1 221.6Z" fill="#fb2424" stroke="#fb2424" stroke-width="3" stroke-linejoin="round"/></svg>
<div id="call">
<p style="top:-0.5px;letter-spacing:0.108px">Cette rubrique permet de gérer les modèles</p>
<p style="top:36.6px;letter-spacing:-0.026px">d'états financiers (compte de résultat, SIG, bilan,</p>
<p style="top:73.7px;letter-spacing:0.004px">indicateurs) intégrables dans la plaquette.</p>
<p style="top:110.8px;letter-spacing:0.032px">L'application propose des modèles prédéfinis que</p>
<p style="top:147.9px;letter-spacing:0.07px">vous pouvez dupliquer et personnaliser</p>
</div>
</div>
</body>
</html>
